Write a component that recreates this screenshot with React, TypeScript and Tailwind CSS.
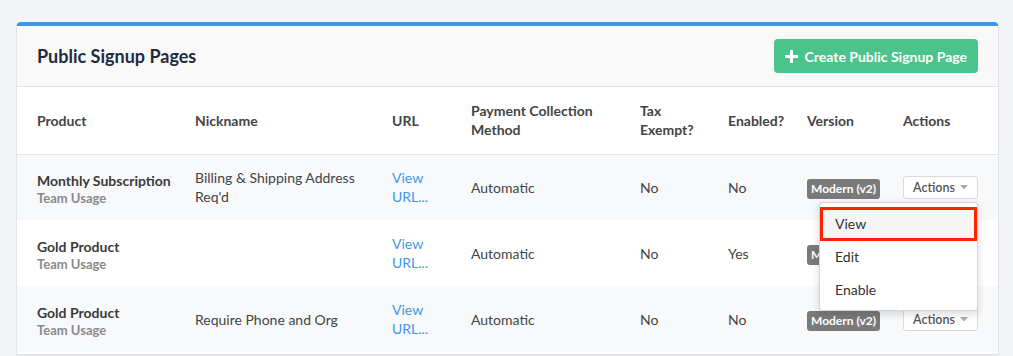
import React from 'react';

type Row = {
  product: string;
  sub: string;
  nickname: React.ReactNode;
  payment: string;
  tax: string;
  enabled: string;
  open?: boolean;
};

const rows: Row[] = [
  { product: 'Monthly Subscription', sub: 'Team Usage', nickname: <>Billing &amp; Shipping Address<br />Req'd</>, payment: 'Automatic', tax: 'No', enabled: 'No', open: true },
  { product: 'Gold Product', sub: 'Team Usage', nickname: '', payment: 'Automatic', tax: 'No', enabled: 'Yes' },
  { product: 'Gold Product', sub: 'Team Usage', nickname: 'Require Phone and Org', payment: 'Automatic', tax: 'No', enabled: 'No' },
];

const PlusIcon = () => (
  <svg width="13" height="13" viewBox="0 0 13 13" fill="none">
    <path d="M6.5 1v11M1 6.5h11" stroke="white" strokeWidth="3" strokeLinecap="round" />
  </svg>
);

const ActionsMenu: React.FC<{ open?: boolean }> = ({ open }) => (
  <div className="relative inline-block">
    <button className="flex items-center justify-center gap-[5px] w-[75px] h-[23px] bg-white border border-[#d9d9d9] rounded-[3px] text-[12.5px] font-semibold text-[#555]">
      Actions
      <svg width="8" height="5" viewBox="0 0 8 5">
        <path d="M0 0h8L4 4.5z" fill="#aaa" />
      </svg>
    </button>
    {open && (
      <div className="absolute right-0 top-full mt-[3px] z-10 w-[159px] bg-white border border-[#d4d4d4] rounded-[3px] shadow-[0_3px_8px_rgba(0,0,0,0.15)] pt-[4px] pb-[4px] text-[14px] text-[#333]">
        <div className="h-[34px] flex items-center pl-[12px] bg-[#f5f5f5] border-[3px] border-[#ff2200]">View</div>
        <div className="h-[33px] flex items-center pl-[15px] -mt-[1px]">Edit</div>
        <div className="h-[33px] flex items-center pl-[15px]">Enable</div>
      </div>
    )}
  </div>
);

export default function App() {
  return (
    <div className="h-screen overflow-hidden bg-[#f3f4f7] pl-4 pr-[14px] pt-[22px] font-['Lato','Liberation_Sans',sans-serif]">
      <div className="bg-white border border-[#e1e4e8] border-t-4 border-t-[#3f95e8] rounded-t-[5px] pb-[2px] shadow-[0_1px_2px_rgba(0,0,0,0.04)]">
        <div className="flex items-center justify-between h-[61px] pl-[20px] pr-[20px] bg-[#f9f9fa] border-b border-[#e3e3e3]">
          <h2 className="text-[18px] font-bold text-[#1f2b3d]">Public Signup Pages</h2>
          <button className="flex items-center gap-[7px] h-[34px] px-[11px] bg-[#4ac48a] rounded-[4px] text-white text-[14px] font-bold">
            <PlusIcon />
            Create Public Signup Page
          </button>
        </div>
        <table className="w-full table-fixed border-collapse text-[14px] text-[#444] leading-[19px]">
          <colgroup>
            <col className="w-[178px]" />
            <col className="w-[197px]" />
            <col className="w-[79px]" />
            <col className="w-[169px]" />
            <col className="w-[88px]" />
            <col className="w-[79px]" />
            <col className="w-[96px]" />
            <col className="w-[95px]" />
          </colgroup>
          <thead>
            <tr className="h-[67px] border-b border-[#e3e3e3] text-left font-bold text-[#444]">
              <th className="pl-[20px] font-bold">Product</th>
              <th className="font-bold">Nickname</th>
              <th className="font-bold">URL</th>
              <th className="font-bold">Payment Collection<br />Method</th>
              <th className="font-bold">Tax<br />Exempt?</th>
              <th className="font-bold">Enabled?</th>
              <th className="font-bold">Version</th>
              <th className="font-bold">Actions</th>
            </tr>
          </thead>
          <tbody>
            {rows.map((r, i) => (
              <tr key={i} className={`h-[66px] ${i % 2 === 0 ? 'bg-[#f8f9fa]' : 'bg-white'}`}>
                <td className="pl-[20px] align-middle">
                  <div className="font-bold text-[#3b3b3b] mt-[2px]">{r.product}</div>
                  <div className="text-[13px] font-bold text-[#8a8a8a] leading-[16px]">{r.sub}</div>
                </td>
                <td className="align-middle">{r.nickname}</td>
                <td className="align-middle">
                  <a className="text-[#3d98e8]">View<br />URL...</a>
                </td>
                <td className="align-middle">{r.payment}</td>
                <td className="align-middle">{r.tax}</td>
                <td className="align-middle">{r.enabled}</td>
                <td className="align-middle">
                  <span className="inline-block mt-[4px] px-[4px] h-[20px] leading-[20px] rounded-[3px] bg-[#7a7a7a] text-white text-[12px] font-bold">Modern (v2)</span>
                </td>
                <td className="align-middle">
                  <ActionsMenu open={r.open} />
                </td>
              </tr>
            ))}
          </tbody>
        </table>
      </div>
    </div>
  );
}
